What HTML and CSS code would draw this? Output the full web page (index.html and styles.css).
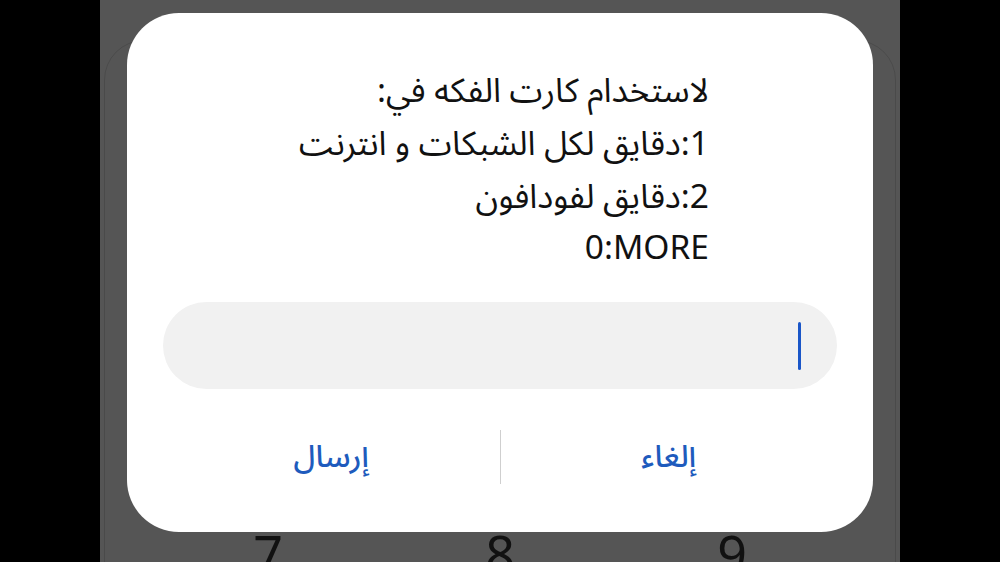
FILE: index.html
```html
<!DOCTYPE html>
<html lang="ar">
<head>
<meta charset="utf-8">
<link rel="stylesheet" href="styles.css">
</head>
<body>
<div class="screen">
  <div class="backdrop-card"></div>
  <div class="keypad">
    <span class="key">7</span>
    <span class="key">8</span>
    <span class="key">9</span>
  </div>
  <div class="dialog" dir="rtl">
    <div class="message-wrap">
      <div class="message">
        <div class="line">لاستخدام كارت الفكه في:</div>
        <div class="line">1:دقايق لكل الشبكات و انترنت</div>
        <div class="line">2:دقايق لفودافون</div>
        <div class="line latin" dir="ltr">0:MORE</div>
      </div>
    </div>
    <div class="input"><span class="cursor"></span></div>
    <div class="actions">
      <div class="btn">إلغاء</div>
      <div class="divider"></div>
      <div class="btn">إرسال</div>
    </div>
  </div>
</div>
</body>
</html>
```

FILE: styles.css
```css
html, body {
  margin: 0;
  padding: 0;
  background: #000;
  font-family: "Noto Sans", "Noto Sans Arabic", "DejaVu Sans", sans-serif;
}

.screen {
  position: relative;
  width: 800px;
  height: 562px;
  margin: 0 auto;
  background: #555555;
  overflow: hidden;
  display: flex;
  flex-direction: column;
  justify-content: flex-end;
}

.backdrop-card {
  position: absolute;
  left: 4px;
  right: 4px;
  top: 40px;
  height: 600px;
  border-radius: 40px;
  border: 1px solid rgba(0, 0, 0, 0.12);
}

.keypad {
  display: flex;
  justify-content: space-between;
  padding: 0 128px;
  margin-bottom: -22px;
}

.key {
  width: 80px;
  text-align: center;
  font-size: 52px;
  line-height: 60px;
  color: #111;
}

.dialog {
  position: absolute;
  left: 27px;
  top: 13px;
  width: 746px;
  height: 519px;
  box-sizing: border-box;
  background: #fff;
  border-radius: 52px;
  padding: 50px 36px 0 36px;
  display: flex;
  flex-direction: column;
}

.message-wrap {
  display: flex;
  justify-content: center;
  padding-left: 8px;
}

.message {
  text-align: right;
  color: #111;
  font-size: 33.5px;
}

.line {
  line-height: 53px;
  white-space: nowrap;
}

.line.latin {
  line-height: 48px;
  text-align: right;
}

.input {
  margin-top: 32px;
  height: 87px;
  border-radius: 44px;
  background: #f1f1f1;
  display: flex;
  align-items: center;
  padding: 0 36px;
}

.cursor {
  width: 3px;
  height: 48px;
  border-radius: 2px;
  background: #1a56c8;
}

.actions {
  margin-top: 40px;
  display: flex;
  align-items: center;
  height: 56px;
}

.btn {
  flex: 1;
  text-align: center;
  font-size: 31px;
  font-weight: 500;
  color: #1e5bbd;
}

.divider {
  width: 1px;
  height: 54px;
  background: #cfcfcf;
}
```
